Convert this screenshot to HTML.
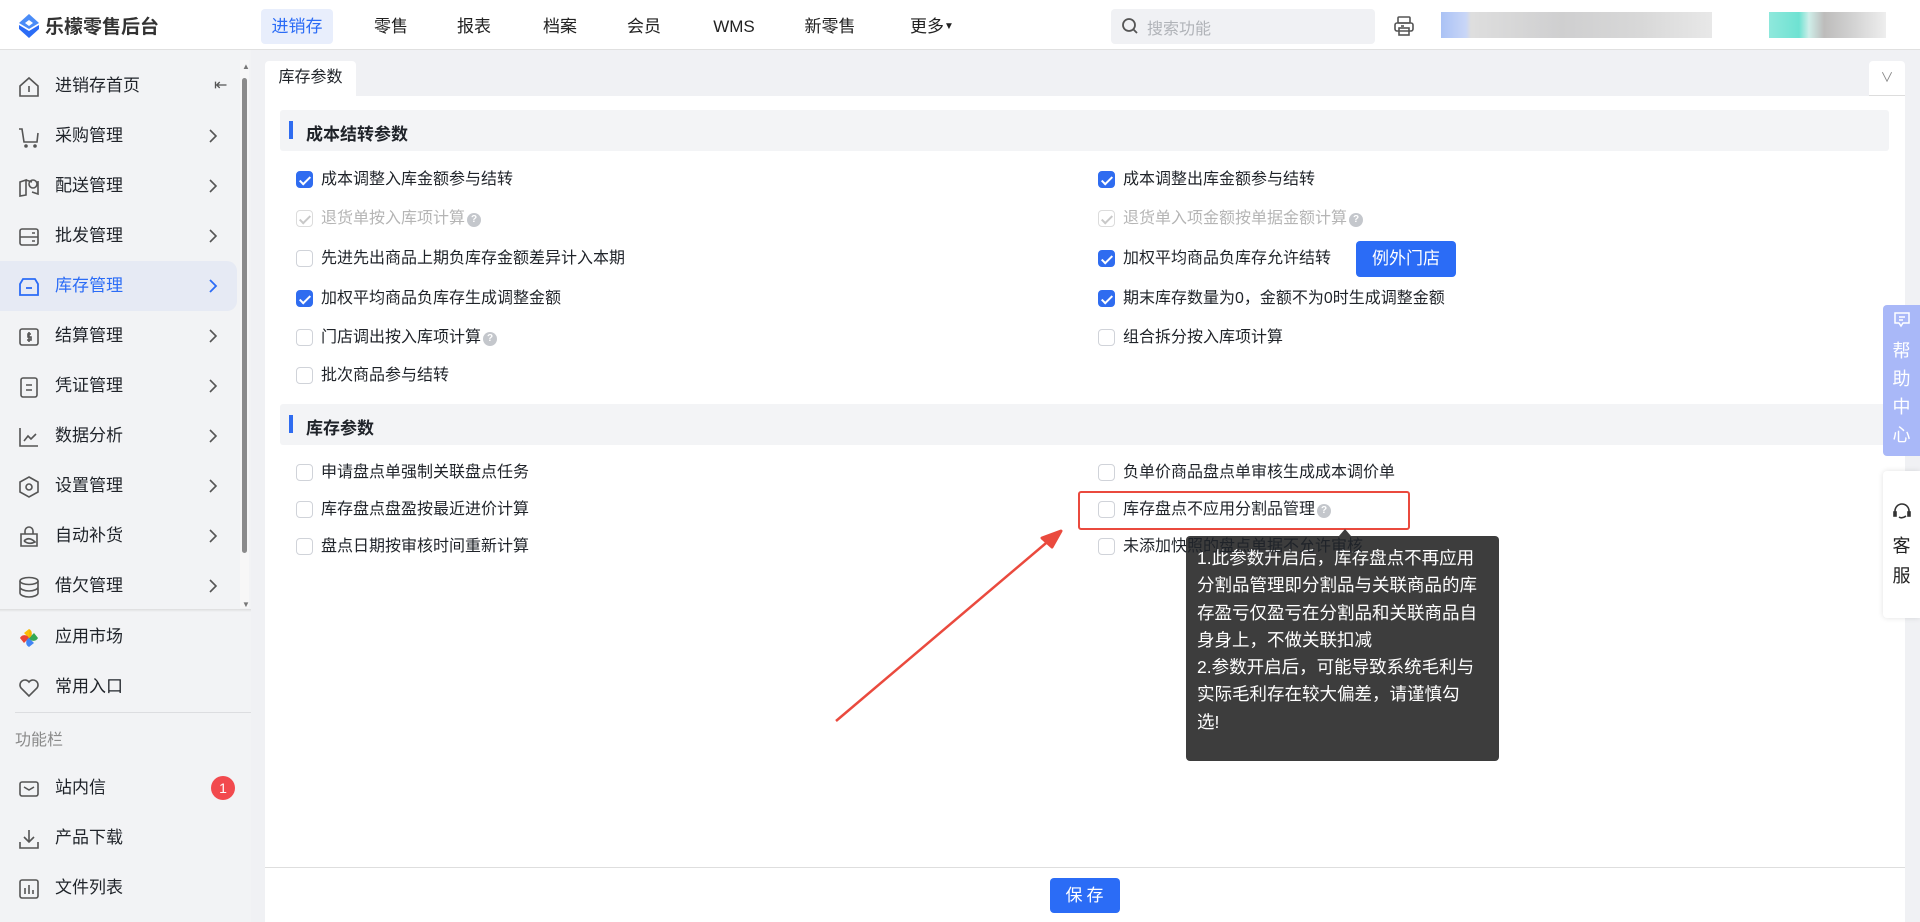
<!DOCTYPE html>
<html><head><meta charset="utf-8">
<style>
*{box-sizing:border-box;margin:0;padding:0}
body{width:1920px;height:922px;overflow:hidden;background:#f0f1f4;font-family:"Liberation Sans","Noto Sans CJK SC",sans-serif;color:#1f2329;position:relative}
.abs{position:absolute}
.hdr{left:0;top:0;width:1920px;height:50px;background:#fff;border-bottom:1px solid #e0e0e0}
.logo{left:45px;top:12px;font-size:19px;font-weight:bold;color:#333;letter-spacing:0px}
.nav{top:9px;height:35px;line-height:35px;font-size:17px;color:#222;text-align:center}
.side{left:0;top:50px;width:251px;height:872px;background:#f2f3f5}
.si{position:absolute;left:0;width:237px;height:50px;font-size:17px;line-height:50px}
.si .t{position:absolute;left:55px}
.si svg{position:absolute;left:18px;top:15px}
.si .ar{position:absolute;left:208px;top:17px}
.act{background:#e6eaf4;border-radius:0 10px 10px 0;color:#2b6cf6}
.cb{position:absolute;width:17px;height:17px;border:1px solid #d0d3d9;border-radius:4px;background:#fff}
.cb.on{background:#2f6cf0;border-color:#2f6cf0}
.cb.on::after{content:"";position:absolute;left:5px;top:1.5px;width:4px;height:9px;border:solid #fff;border-width:0 2.2px 2.2px 0;transform:rotate(45deg)}
.cb.dis{background:#fff;border-color:#dcdcdc}
.cb.dis::after{content:"";position:absolute;left:5px;top:1.5px;width:4px;height:9px;border:solid #c8c8c8;border-width:0 2px 2px 0;transform:rotate(45deg)}
.row{position:absolute;font-size:16px;line-height:20px;white-space:nowrap}
.row .cb{left:0;top:1px}
.row .tx{position:absolute;left:25px;top:0}
.dim{color:#b5b5b5}
.q{display:inline-block;width:14px;height:14px;border-radius:50%;background:#c4c7cc;color:#fff;font-size:10px;line-height:14px;text-align:center;vertical-align:1px;margin-left:2px;font-weight:bold}
.sec{left:280px;width:1609px;height:41px;background:#f3f4f6;border-radius:3px}
.sec .bar{position:absolute;left:9px;top:11px;width:4px;height:18px;background:#2f6cf0}
.sec .t{position:absolute;left:26px;top:10px;font-size:17px;font-weight:bold}
</style></head><body>

<div class="abs hdr"></div>
<svg class="abs" style="left:19px;top:14px" width="20" height="24" viewBox="0 0 20 24"><path d="M10 0L20 9L10 15L0 9Z" fill="#4a8cf7"/><path d="M0 11L10 17L20 11L20 15L10 24L0 15Z" fill="#2b6cf6"/><path d="M10 6L14 9L10 12L6 9Z" fill="#fff"/></svg>
<div class="abs logo">乐檬零售后台</div>
<div class="abs nav" style="left:261px;width:72px;background:#e8eefc;color:#2b6cf6;border-radius:4px">进销存</div>
<div class="abs nav" style="left:361px;width:60px">零售</div>
<div class="abs nav" style="left:444px;width:60px">报表</div>
<div class="abs nav" style="left:530px;width:60px">档案</div>
<div class="abs nav" style="left:614px;width:60px">会员</div>
<div class="abs nav" style="left:704px;width:60px">WMS</div>
<div class="abs nav" style="left:795px;width:70px">新零售</div>
<div class="abs nav" style="left:902px;width:60px">更多<span style="font-size:10px;vertical-align:3px">▼</span></div>
<div class="abs" style="left:1111px;top:9px;width:264px;height:35px;background:#f0f1f4;border-radius:4px"></div>
<svg class="abs" style="left:1121px;top:17px" width="18" height="18" viewBox="0 0 18 18"><circle cx="8" cy="8" r="6" fill="none" stroke="#555" stroke-width="1.8"/><path d="M12.5 12.5L16 16" stroke="#555" stroke-width="1.8"/></svg>
<div class="abs" style="left:1147px;top:15px;font-size:16px;color:#b0b3b8">搜索功能</div>
<svg class="abs" style="left:1393px;top:15px" width="22" height="22" viewBox="0 0 22 22" fill="none" stroke="#555" stroke-width="1.6"><rect x="5" y="2" width="12" height="6" rx="1"/><rect x="2" y="8" width="18" height="8" rx="2"/><rect x="6" y="13" width="10" height="7"/><path d="M8 11h3"/></svg>
<div class="abs" style="left:1441px;top:12px;width:271px;height:26px;background:linear-gradient(90deg,#aac2f5 0,#c9d6f7 25px,#dedede 30px,#cfcfd0 120px,#d8d8d8 200px,#e8e8e8 271px)"></div>
<div class="abs" style="left:1769px;top:12px;width:117px;height:26px;background:linear-gradient(90deg,#8fe8dc 0,#6ee2d2 30px,#cfeee9 40px,#bdbcbb 55px,#d3d3d3 85px,#eee 117px)"></div>

<div class="abs side"></div>
<div class="abs" style="left:240px;top:60px;width:9px;height:548px;background:#f7f7f7"></div>
<div class="abs" style="left:242px;top:78px;width:5px;height:475px;background:#8b8b8b;border-radius:3px"></div>
<div class="abs" style="left:242px;top:600px;font-size:8px;color:#777">▼</div>
<div class="abs" style="left:242px;top:62px;font-size:8px;color:#777">▲</div>

<div class="si" style="top:61px"><svg width="22" height="22" viewBox="0 0 22 22" fill="none" stroke="#555" stroke-width="1.6"><path d="M2 10L11 2L20 10V20H2Z"/><path d="M11 10V16"/></svg><span class="t">进销存首页</span><span style="position:absolute;left:214px;color:#555;font-size:16px">⇤</span></div>
<div class="si" style="top:111px"><svg width="22" height="22" viewBox="0 0 22 22" fill="none" stroke="#555" stroke-width="1.6"><path d="M1 3H4L6 16H19L20 7"/><circle cx="8" cy="20" r="1" fill="#555"/><circle cx="17" cy="20" r="1" fill="#555"/></svg><span class="t">采购管理</span><svg class="ar" width="10" height="16" viewBox="0 0 10 16"><path d="M2 2L8 8L2 14" fill="none" stroke="#555" stroke-width="1.6"/></svg></div>
<div class="si" style="top:161px"><svg width="22" height="22" viewBox="0 0 22 22" fill="none" stroke="#555" stroke-width="1.6"><path d="M2 6L8 4V19L2 20Z M8 4L14 6M14 16L20 18V5"/><circle cx="15" cy="8" r="4"/></svg><span class="t">配送管理</span><svg class="ar" width="10" height="16" viewBox="0 0 10 16"><path d="M2 2L8 8L2 14" fill="none" stroke="#555" stroke-width="1.6"/></svg></div>
<div class="si" style="top:211px"><svg width="22" height="22" viewBox="0 0 22 22" fill="none" stroke="#555" stroke-width="1.6"><rect x="2" y="3" width="18" height="16" rx="2"/><path d="M2 11H20M14 7H17M14 15H17"/></svg><span class="t">批发管理</span><svg class="ar" width="10" height="16" viewBox="0 0 10 16"><path d="M2 2L8 8L2 14" fill="none" stroke="#555" stroke-width="1.6"/></svg></div>
<div class="si act" style="top:261px"><svg width="22" height="22" viewBox="0 0 22 22" fill="none" stroke="#2b6cf6" stroke-width="1.8"><path d="M5 3H17L20 8V19H2V8Z"/><path d="M8 12H14"/></svg><span class="t">库存管理</span><svg class="ar" width="10" height="16" viewBox="0 0 10 16"><path d="M2 2L8 8L2 14" fill="none" stroke="#2b6cf6" stroke-width="1.8"/></svg></div>
<div class="si" style="top:311px"><svg width="22" height="22" viewBox="0 0 22 22" fill="none" stroke="#555" stroke-width="1.6"><rect x="2" y="3" width="18" height="16" rx="2"/><path d="M13 8H10V11H13V14H9M11 6V16"/></svg><span class="t">结算管理</span><svg class="ar" width="10" height="16" viewBox="0 0 10 16"><path d="M2 2L8 8L2 14" fill="none" stroke="#555" stroke-width="1.6"/></svg></div>
<div class="si" style="top:361px"><svg width="22" height="22" viewBox="0 0 22 22" fill="none" stroke="#555" stroke-width="1.6"><rect x="3" y="2" width="16" height="19" rx="2"/><path d="M8 9H14M8 14H14"/></svg><span class="t">凭证管理</span><svg class="ar" width="10" height="16" viewBox="0 0 10 16"><path d="M2 2L8 8L2 14" fill="none" stroke="#555" stroke-width="1.6"/></svg></div>
<div class="si" style="top:411px"><svg width="22" height="22" viewBox="0 0 22 22" fill="none" stroke="#555" stroke-width="1.6"><path d="M2 2V20H20M6 15L10 10L13 13L18 8"/></svg><span class="t">数据分析</span><svg class="ar" width="10" height="16" viewBox="0 0 10 16"><path d="M2 2L8 8L2 14" fill="none" stroke="#555" stroke-width="1.6"/></svg></div>
<div class="si" style="top:461px"><svg width="22" height="22" viewBox="0 0 22 22" fill="none" stroke="#555" stroke-width="1.6"><path d="M11 1L20 6V16L11 21L2 16V6Z"/><circle cx="11" cy="11" r="3"/></svg><span class="t">设置管理</span><svg class="ar" width="10" height="16" viewBox="0 0 10 16"><path d="M2 2L8 8L2 14" fill="none" stroke="#555" stroke-width="1.6"/></svg></div>
<div class="si" style="top:511px"><svg width="22" height="22" viewBox="0 0 22 22" fill="none" stroke="#555" stroke-width="1.6"><path d="M3 8H19V20H3Z M7 8V5A4 4 0 0 1 15 5V8"/><path d="M6 15Q11 10 17 16Q11 19 6 15"/></svg><span class="t">自动补货</span><svg class="ar" width="10" height="16" viewBox="0 0 10 16"><path d="M2 2L8 8L2 14" fill="none" stroke="#555" stroke-width="1.6"/></svg></div>
<div class="si" style="top:561px"><svg width="22" height="22" viewBox="0 0 22 22" fill="none" stroke="#555" stroke-width="1.6"><ellipse cx="11" cy="5" rx="9" ry="3.5"/><path d="M2 5V17C2 19 6 21 11 21S20 19 20 17V5M2 11C2 13 6 15 11 15S20 13 20 11"/></svg><span class="t">借欠管理</span><svg class="ar" width="10" height="16" viewBox="0 0 10 16"><path d="M2 2L8 8L2 14" fill="none" stroke="#555" stroke-width="1.6"/></svg></div>
<div class="abs" style="left:0;top:609px;width:251px;height:3px;background:linear-gradient(#ddd,#f2f3f5)"></div>

<div class="si" style="top:612px"><svg width="22" height="22" viewBox="0 0 22 22"><path d="M11 11L11 2L6 6Z" fill="#fbbc05"/><path d="M11 11L20 11L16 6Z" fill="#34a853"/><path d="M11 11L11 20L16 16Z" fill="#4285f4"/><path d="M11 11L2 11L6 16Z" fill="#ea4335"/><path d="M11 2A5 5 0 0 1 11 11Z" fill="#f5b400"/><path d="M20 11A5 5 0 0 1 11 11Z" fill="#34a853"/><path d="M11 20A5 5 0 0 1 11 11Z" fill="#4285f4"/><path d="M2 11A5 5 0 0 1 11 11Z" fill="#ea4335"/></svg><span class="t">应用市场</span></div>
<div class="si" style="top:662px"><svg width="22" height="22" viewBox="0 0 22 22" fill="none" stroke="#555" stroke-width="1.6"><path d="M11 19L3 11A4.5 4.5 0 0 1 11 5A4.5 4.5 0 0 1 19 11Z"/></svg><span class="t">常用入口</span></div>
<div class="abs" style="left:15px;top:712px;width:236px;height:1px;background:#dcdde0"></div>
<div class="abs" style="left:15px;top:726px;font-size:16px;color:#8a8a8a">功能栏</div>
<div class="si" style="top:763px"><svg width="22" height="22" viewBox="0 0 22 22" fill="none" stroke="#555" stroke-width="1.6"><rect x="2" y="4" width="18" height="14" rx="2"/><path d="M6 9L11 12L16 9"/></svg><span class="t">站内信</span><span style="position:absolute;left:211px;top:13px;width:24px;height:24px;border-radius:50%;background:#f24a4e;color:#fff;font-size:14px;line-height:24px;text-align:center">1</span></div>
<div class="si" style="top:813px"><svg width="22" height="22" viewBox="0 0 22 22" fill="none" stroke="#555" stroke-width="1.6"><path d="M11 2V14M6 9L11 14L16 9M2 14V20H20V14"/></svg><span class="t">产品下载</span></div>
<div class="si" style="top:863px"><svg width="22" height="22" viewBox="0 0 22 22" fill="none" stroke="#555" stroke-width="1.6"><rect x="2" y="2" width="18" height="18" rx="2"/><path d="M7 16V10M11 16V7M15 16V12"/></svg><span class="t">文件列表</span></div>

<!-- tab -->
<div class="abs" style="left:265px;top:61px;width:91px;height:36px;background:#fff;border-radius:4px 4px 0 0;font-size:16px;line-height:34px;text-align:center">库存参数</div>
<div class="abs" style="left:1869px;top:61px;width:36px;height:35px;background:#fff;border-radius:4px 4px 0 0;border-bottom:1px solid #ddd;color:#888;text-align:center;line-height:33px;font-size:13px">∨</div>
<div class="abs" style="left:265px;top:96px;width:1640px;height:826px;background:#fff"></div>
<div class="abs" style="left:265px;top:867px;width:1640px;height:1px;background:#dedede"></div>
<div class="abs" style="left:1050px;top:878px;width:70px;height:35px;background:#2b6cf6;border-radius:4px;color:#fff;font-size:17px;line-height:35px;text-align:center;letter-spacing:4px;padding-left:3px">保存</div>

<div class="abs sec" style="top:110px"><div class="bar"></div><div class="t">成本结转参数</div></div>
<div class="row" style="left:296px;top:170px"><span class="cb on"></span><span class="tx">成本调整入库金额参与结转</span></div>
<div class="row" style="left:296px;top:209px"><span class="cb dis"></span><span class="tx dim">退货单按入库项计算<span class="q">?</span></span></div>
<div class="row" style="left:296px;top:249px"><span class="cb"></span><span class="tx">先进先出商品上期负库存金额差异计入本期</span></div>
<div class="row" style="left:296px;top:289px"><span class="cb on"></span><span class="tx">加权平均商品负库存生成调整金额</span></div>
<div class="row" style="left:296px;top:328px"><span class="cb"></span><span class="tx">门店调出按入库项计算<span class="q">?</span></span></div>
<div class="row" style="left:296px;top:366px"><span class="cb"></span><span class="tx">批次商品参与结转</span></div>

<div class="row" style="left:1098px;top:170px"><span class="cb on"></span><span class="tx">成本调整出库金额参与结转</span></div>
<div class="row" style="left:1098px;top:209px"><span class="cb dis"></span><span class="tx dim">退货单入项金额按单据金额计算<span class="q">?</span></span></div>
<div class="row" style="left:1098px;top:249px"><span class="cb on"></span><span class="tx">加权平均商品负库存允许结转</span></div>
<div class="abs" style="left:1356px;top:241px;width:100px;height:36px;background:#2b6cf6;border-radius:4px;color:#fff;font-size:17px;line-height:36px;text-align:center">例外门店</div>
<div class="row" style="left:1098px;top:289px"><span class="cb on"></span><span class="tx">期末库存数量为0，金额不为0时生成调整金额</span></div>
<div class="row" style="left:1098px;top:328px"><span class="cb"></span><span class="tx">组合拆分按入库项计算</span></div>

<div class="abs sec" style="top:404px"><div class="bar"></div><div class="t">库存参数</div></div>
<div class="row" style="left:296px;top:463px"><span class="cb"></span><span class="tx">申请盘点单强制关联盘点任务</span></div>
<div class="row" style="left:296px;top:500px"><span class="cb"></span><span class="tx">库存盘点盘盈按最近进价计算</span></div>
<div class="row" style="left:296px;top:537px"><span class="cb"></span><span class="tx">盘点日期按审核时间重新计算</span></div>
<div class="row" style="left:1098px;top:463px"><span class="cb"></span><span class="tx">负单价商品盘点单审核生成成本调价单</span></div>
<div class="row" style="left:1098px;top:500px"><span class="cb"></span><span class="tx">库存盘点不应用分割品管理<span class="q">?</span></span></div>
<div class="abs" style="left:1078px;top:491px;width:332px;height:39px;border:2.5px solid #ea4a3e;border-radius:3px"></div>

<svg class="abs" style="left:0;top:0" width="1920" height="922"><path d="M836 721L1052 538" stroke="#ea4a3e" stroke-width="2.5"/><path d="M1061 531L1042 538L1052 547Z" fill="#ea4a3e" stroke="#ea4a3e" stroke-width="3" stroke-linejoin="round"/></svg>

<div class="abs" style="left:1339px;top:529px;width:0;height:0;border-left:6px solid transparent;border-right:6px solid transparent;border-bottom:7px solid #3d3d3d"></div>
<div class="abs" style="left:1186px;top:536px;width:313px;height:225px;background:#3d3d3d;border-radius:4px;color:#fff;font-size:17.5px;line-height:27.3px;padding:9px 0 0 11px;white-space:nowrap">1.此参数开启后，库存盘点不再应用<br>分割品管理即分割品与关联商品的库<br>存盈亏仅盈亏在分割品和关联商品自<br>身身上，不做关联扣减<br>2.参数开启后，可能导致系统毛利与<br>实际毛利存在较大偏差，请谨慎勾<br>选!</div>
<div class="row" style="left:1098px;top:537px"><span class="cb"></span><span class="tx">未添加快照的盘点单据不允许审核</span></div>

<div class="abs" style="left:1883px;top:305px;width:37px;height:151px;background:#a9b8f8;border-radius:4px 0 0 4px;color:#fff;font-size:18px;text-align:center;line-height:28px;padding-top:4px"><svg width="18" height="18" viewBox="0 0 18 18" fill="none" stroke="#fff" stroke-width="1.5"><path d="M2 2H16V12H10L8 15L6 12H2Z M6 6H12M6 9H10"/></svg><br>帮<br>助<br>中<br>心</div>
<div class="abs" style="left:1883px;top:471px;width:37px;height:147px;background:#fff;border-radius:4px 0 0 4px;box-shadow:0 0 6px rgba(0,0,0,.12);color:#222;font-size:18px;text-align:center;line-height:30px;padding-top:30px"><svg width="20" height="20" viewBox="0 0 20 20" fill="none" stroke="#333" stroke-width="1.6"><path d="M3 12V9A7 7 0 0 1 17 9V12M7 15Q10 17 14 14"/><rect x="2" y="10" width="2" height="4" fill="#333"/><rect x="16" y="10" width="2" height="4" fill="#333"/></svg><br>客<br>服</div>
</body></html>
